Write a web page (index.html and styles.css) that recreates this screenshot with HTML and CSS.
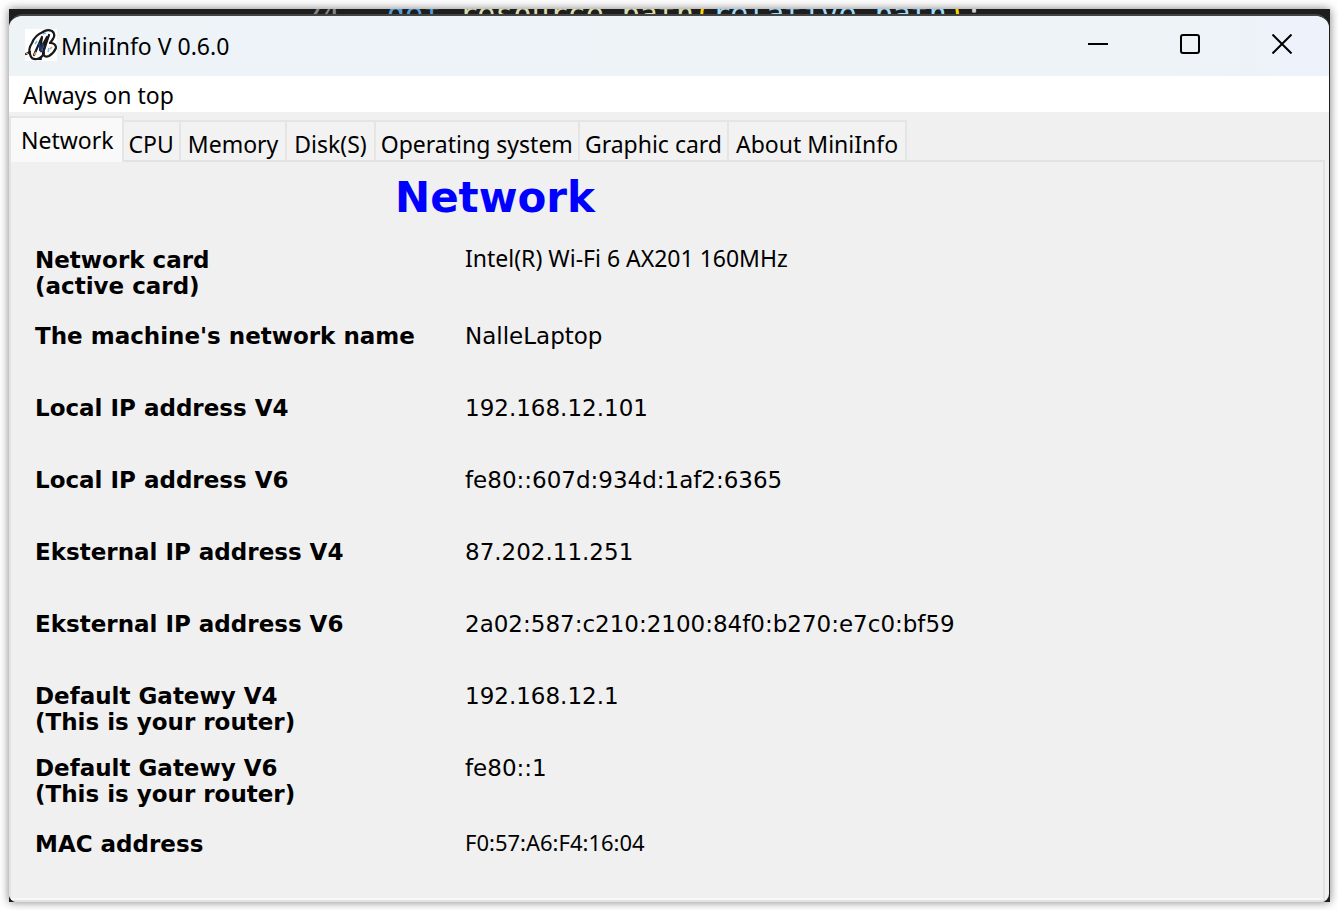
FILE: index.html
```
<!DOCTYPE html>
<html lang="en">
<head>
<meta charset="utf-8">
<title>MiniInfo V 0.6.0</title>
<link rel="stylesheet" href="styles.css">
</head>
<body>
<div class="desktop">
  <div class="editor"><code class="code-line"><span class="line-no">24</span><span class="keyword">def</span> <span class="func">resource_path</span><span class="paren">(</span><span class="param">relative_path</span><span class="paren">)</span>:</code></div>
  <main class="window">
    <header class="titlebar">
      <svg class="app-icon" viewBox="0 0 32 32" aria-hidden="true">
        <rect width="32" height="32" fill="#fff"/>
        <g fill="none" stroke="#191919" stroke-width="2.2" stroke-linecap="round" stroke-linejoin="round">
          <path d="M18 3Q22 0 27 2Q31 5 28 10L25 14Q31 14 31 19Q29 24 24 27Q19 29 18 24L24 6"/>
          <path d="M18 3Q10 6 7 14Q3 20 5 25Q6 31 12 30Q17 29 19 24"/>
          <path d="M1 25L5 23M9 26L17 8L15 21L22 8L18 24M10 30L16 30"/>
        </g>
        <path d="M14 14L16 23L18 15" fill="none" stroke="#173c78" stroke-width="2"/>
        <path d="M9 26L11 23M25 20L27 18M1 24L3 25" stroke="#dd9a55" stroke-width="1.5"/>
        <path d="M10 15L12 12M18 5L21 4M23 23L24 19" stroke="#70b9e4" stroke-width="1.5"/>
      </svg>
      <h1 class="title">MiniInfo V 0.6.0</h1>
      <button class="caption-button" type="button" aria-label="Minimize"><svg viewBox="0 0 20 20"><path d="M0 10H20"/></svg></button>
      <button class="caption-button" type="button" aria-label="Maximize"><svg viewBox="0 0 20 20"><rect x="1" y="1" width="18" height="18" rx="2"/></svg></button>
      <button class="caption-button" type="button" aria-label="Close"><svg viewBox="0 0 20 20"><path d="M0.5 0.5L19.5 19.5M19.5 0.5L0.5 19.5"/></svg></button>
    </header>
    <nav class="menubar"><button class="menu-item" type="button">Always on top</button></nav>
    <div class="notebook">
      <div class="tabs" role="tablist">
        <button class="tab active" type="button" role="tab" aria-selected="true">Network</button>
        <button class="tab" type="button" role="tab">CPU</button>
        <button class="tab roomy" type="button" role="tab">Memory</button>
        <button class="tab roomy" type="button" role="tab">Disk(S)</button>
        <button class="tab" type="button" role="tab">Operating system</button>
        <button class="tab" type="button" role="tab">Graphic card</button>
        <button class="tab roomy" type="button" role="tab">About MiniInfo</button>
      </div>
      <section class="panel" role="tabpanel">
        <h2 class="heading">Network</h2>
        <dl class="facts">
          <dt class="tall">Network card<br>(active card)</dt><dd class="ui">Intel(R) Wi-Fi 6 AX201 160MHz</dd>
          <dt>The machine's network name</dt><dd>NalleLaptop</dd>
          <dt>Local IP address V4</dt><dd>192.168.12.101</dd>
          <dt>Local IP address V6</dt><dd>fe80::607d:934d:1af2:6365</dd>
          <dt>Eksternal IP address V4</dt><dd>87.202.11.251</dd>
          <dt>Eksternal IP address V6</dt><dd>2a02:587:c210:2100:84f0:b270:e7c0:bf59</dd>
          <dt>Default Gatewy V4<br>(This is your router)</dt><dd>192.168.12.1</dd>
          <dt class="tall">Default Gatewy V6<br>(This is your router)</dt><dd>fe80::1</dd>
          <dt class="last">MAC address</dt><dd class="ui small">F0:57:A6:F4:16:04</dd>
        </dl>
      </section>
    </div>
  </main>
</div>
</body>
</html>
```
FILE: styles.css
```
* { box-sizing: border-box; }
body {
  margin: 0;
  min-height: 100vh;
  padding: 9px 8px 8px 9px;
  display: flex;
  background: #fff;
  color: #000;
  font: 23px/30px "Noto Sans", sans-serif;
}
button { border: 0; background: none; color: inherit; font: inherit; }
.desktop {
  flex: 1;
  min-width: 0;
  display: flex;
  flex-direction: column;
  padding-right: 1px;
  background: #1e1e1e;
  box-shadow: 0 0 9px rgba(0, 0, 0, .5);
}
.editor { height: 5px; overflow: hidden; }
.code-line {
  display: block;
  margin: -10px 0 0 295px;
  color: #d4d4d4;
  font: 30px/30px "DejaVu Sans Mono", monospace;
  white-space: pre;
}
.line-no { display: inline-block; width: 83px; color: #858585; }
.keyword { color: #569cd6; }
.func { color: #dcdcaa; }
.param { color: #9cdcfe; }
.paren { color: #ffd700; }
.window {
  flex: 1;
  display: flex;
  flex-direction: column;
  overflow: hidden;
  border-top: 2px solid #444;
  border-radius: 14px 14px 8px 8px;
  background: #f0f0f0;
}
.titlebar {
  display: flex;
  align-items: center;
  height: 60px;
  padding: 0 1px 0 16px;
  background: linear-gradient(90deg, #eef3f6, #eef3fa 25%, #edf3f7 50%, #edf3f7 88%, #eef2fb);
}
.app-icon { width: 32px; height: 32px; margin-bottom: 2px; }
.title { flex: 1; margin: 0 0 0 4px; font-size: 23px; font-weight: 400; }
.caption-button {
  display: flex;
  align-items: center;
  justify-content: center;
  width: 92px;
  height: 60px;
  padding: 0 0 4px;
}
.caption-button svg {
  width: 20px;
  height: 20px;
  fill: none;
  stroke: #000;
  stroke-width: 2;
}
.menubar { display: flex; height: 36px; background: #fff; }
.menu-item { padding: 4px 14px; }
.notebook { flex: 1; display: flex; flex-direction: column; padding: 4px 4px 0 0; }
.tabs { display: flex; align-items: flex-end; height: 44px; }
.tab {
  height: 40px;
  padding: 5px 5px 0;
  border: 2px solid #e5e5e5;
  border-left: 0;
  border-bottom: 0;
  background: #f2f2f2;
  white-space: nowrap;
}
.roomy { padding: 5px 7px 0; }
.active {
  height: 46px;
  padding: 0 8px 0 10px;
  border-left: 2px solid #e5e5e5;
  background: #f9f9f9;
  margin-bottom: -2px;
  z-index: 1;
}
.panel {
  flex: 1;
  padding: 10px 24px 0;
  border: 2px solid #e3e3e3;
  box-shadow: inset 0 -2px #f9f9f9;
}
.heading {
  width: 920px;
  margin: 0;
  color: #00f;
  font: bold 42px/52px "DejaVu Sans", sans-serif;
  text-align: center;
}
.facts {
  display: grid;
  grid-template-columns: 430px 1fr;
  margin: 23px 0 0;
  font: 23px/26px "DejaVu Sans", sans-serif;
}
dt { min-height: 72px; font-weight: 700; }
dd { margin: 0; }
.tall { min-height: 76px; }
.last { min-height: 26px; }
.ui { font: 23px/22px "Noto Sans", sans-serif; }
.small { font-size: 22px; }
```
